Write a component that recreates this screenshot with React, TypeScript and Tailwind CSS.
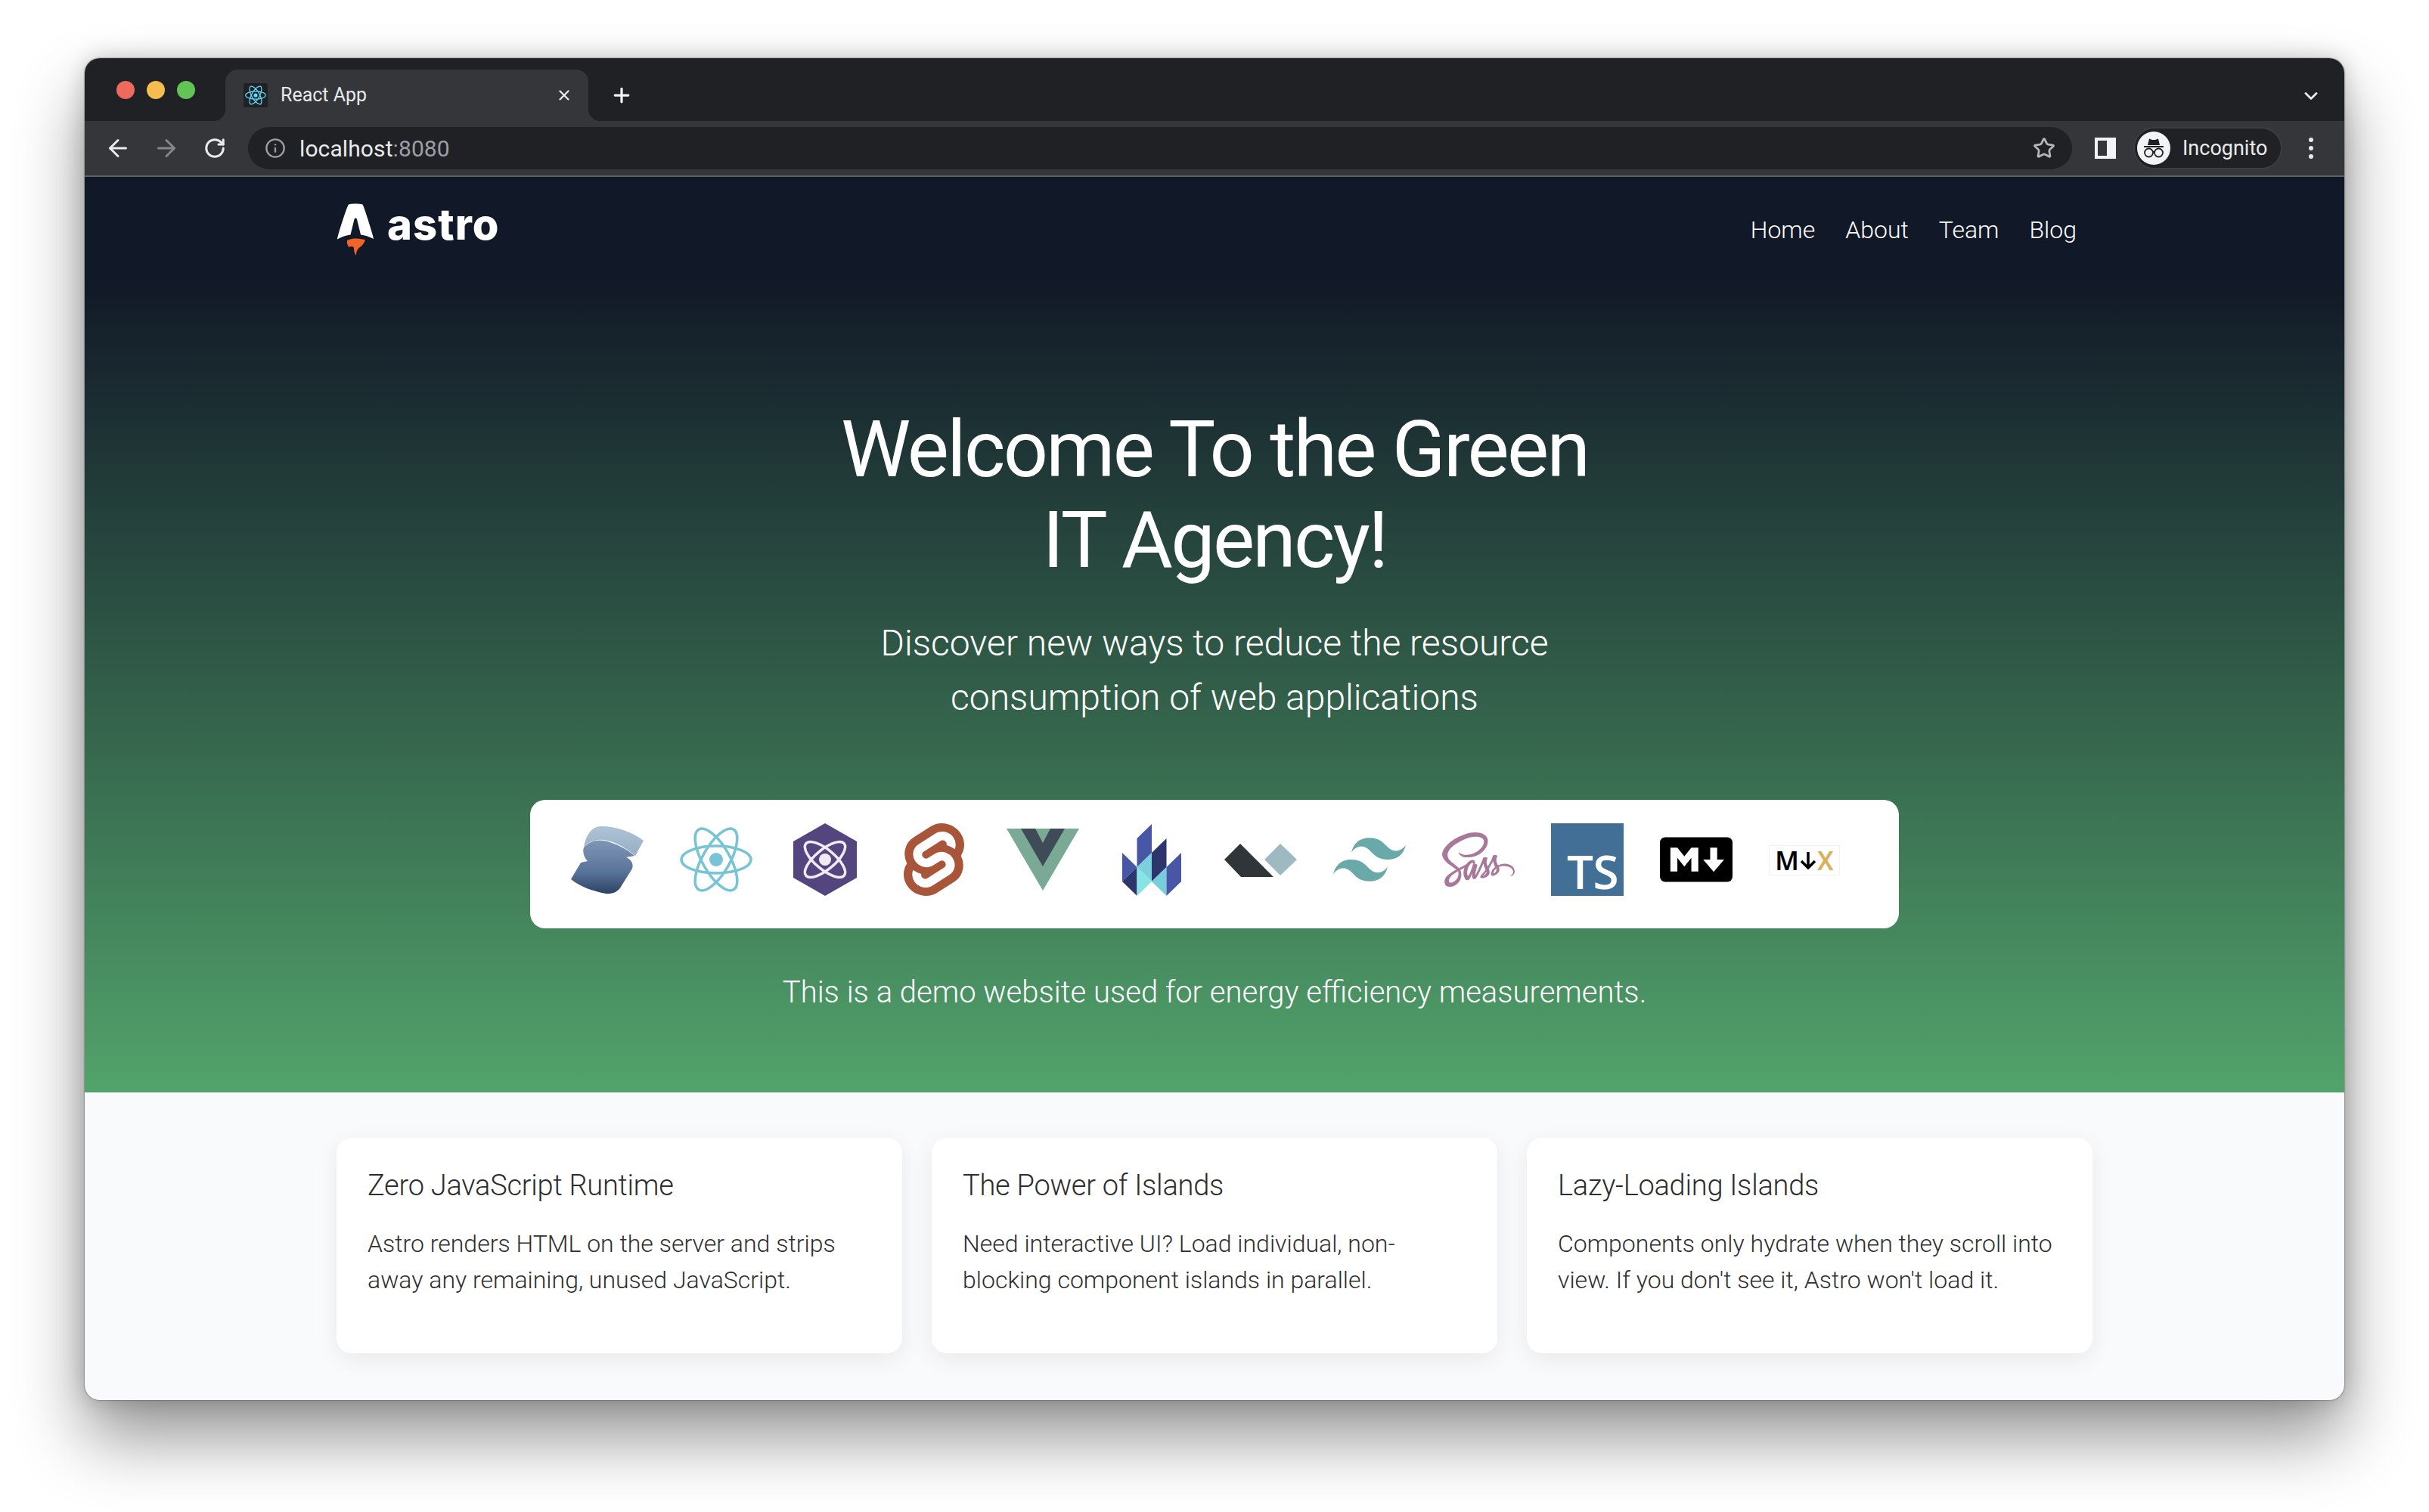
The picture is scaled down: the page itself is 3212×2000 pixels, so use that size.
import React from "react";
import { SiReact, SiSvelte, SiTailwindcss, SiMarkdown } from "react-icons/si";
import { FaSass } from "react-icons/fa";
import { Plus, X, ArrowLeft, ArrowRight, RotateCw, Info, Star, ChevronDown } from "lucide-react";

const roboto = { fontFamily: "Roboto, 'Liberation Sans', sans-serif" };

function Atom({ size, color, r, sw }: { size: number; color: string; r: number; sw: number }) {
  return (
    <svg width={size} height={size} viewBox="0 0 96 96" fill="none" stroke={color} strokeWidth={sw}>
      <ellipse cx="48" cy="48" rx="46" ry="18" />
      <ellipse cx="48" cy="48" rx="46" ry="18" transform="rotate(60 48 48)" />
      <ellipse cx="48" cy="48" rx="46" ry="18" transform="rotate(120 48 48)" />
      <circle cx="48" cy="48" r={r} fill={color} stroke="none" />
    </svg>
  );
}

function AstroLogo() {
  return (
    <svg width="48" height="70" viewBox="0 0 48 70" className="shrink-0">
      <path d="M15 1.500C16 0 32 0 33.500 1.500C35 3 48 44 48 47C42 44 36 42 31 41.500L26 21C25.500 19 23 19 22.500 21L17.500 41.500C12 42 6 44 0 47.500C0 44 13 3 15 1.500Z" fill="#ffffff" />
      <path d="M13 49C17 47.500 19 46.500 24 46.500C29 46.500 31 47.500 37 48C36 52 33 56 30 58C27 60 25 63 25 69C23 67 22 63 22 60C22 58 21 57 19 57C17 57 15.500 58 15.500 58C13 55 12.500 52 13 49Z" fill="#f0642a" />
    </svg>
  );
}

function Solid() {
  return (
    <svg width="96" height="96" viewBox="0 0 96 96" className="shrink-0">
      <defs>
        <linearGradient id="sa" x1="0" y1="0" x2="0" y2="1">
          <stop offset="0" stopColor="#afc3d6" />
          <stop offset="1" stopColor="#95aec6" />
        </linearGradient>
        <linearGradient id="sb" x1="0" y1="0" x2="0" y2="1">
          <stop offset="0" stopColor="#7f96b6" />
          <stop offset="0.6" stopColor="#587399" />
          <stop offset="1" stopColor="#2c4264" />
        </linearGradient>
      </defs>
      <path d="M17 32C20 14 28 5 38 4C55 3 80 10 96 23L85 43C70 30 50 20 36 22C26 23 20 28 17 32Z" fill="url(#sa)" />
      <path d="M17 32C24 24 34 21 44 23C58 26 74 34 84 43L73 45C80 48 83 54 81 60L66 84C62 91 54 94 46 93C30 90 12 84 0 74L13 52L22 50C17 45 15 38 17 32Z" fill="url(#sb)" />
    </svg>
  );
}

function Preact() {
  return (
    <svg width="96" height="96" viewBox="0 0 96 96" className="shrink-0">
      <polygon points="48,0 90,24 90,72 48,96 6,72 6,24" fill="#54457f" />
      <g fill="none" stroke="#efeaf3" strokeWidth="3.500">
        <ellipse cx="48" cy="48" rx="33" ry="13" transform="rotate(40 48 48)" />
        <ellipse cx="48" cy="48" rx="33" ry="13" transform="rotate(-40 48 48)" />
      </g>
      <circle cx="48" cy="48" r="8" fill="#efeaf3" />
    </svg>
  );
}

function Vue() {
  return (
    <svg width="96" height="96" viewBox="0 0 96 96" className="shrink-0">
      <polygon points="0,7 96,7 48,89" fill="#7aa995" />
      <polygon points="19,7 38,7 48,26 58,7 77,7 48,57" fill="#3f4b56" />
    </svg>
  );
}

function Lit() {
  return (
    <svg width="96" height="96" viewBox="0 0 96 96" className="shrink-0">
      <polygon points="9,39 28.500,58 9,77" fill="#4756a5" />
      <polygon points="28.500,58 9,77 28.500,96" fill="#2d366c" />
      <polygon points="48,1 28.500,20 28.500,58 48,39" fill="#4756a5" />
      <polygon points="48,39 28.500,58 48,77" fill="#7ad0dc" />
      <polygon points="28.500,58 48,77 28.500,96" fill="#86e4e4" />
      <polygon points="67.500,20 48,39 48,77 67.500,58" fill="#2d366c" />
      <polygon points="67.500,58 48,77 67.500,96" fill="#78cddb" />
      <polygon points="87,39 67.500,58 67.500,96 87,77" fill="#4756a5" />
    </svg>
  );
}

function Alpine() {
  return (
    <svg width="96" height="96" viewBox="0 0 96 96" className="shrink-0">
      <polygon points="53,48 74,27 96,48 74,69" fill="#9fb9c3" />
      <polygon points="0,48 21,27 65,71 22,71" fill="#30353a" />
    </svg>
  );
}

function Card({ title, lines }: { title: string; lines: string[] }) {
  return (
    <div className="w-[748px] h-[285px] bg-white rounded-[20px] pt-[39px] pl-[41px] shadow-[0_8px_30px_rgba(0,0,0,0.07)]">
      <h2 className="text-[38px] leading-[48px] font-light tracking-[-0.25px] text-[#2d2d2d]">{title}</h2>
      <div className="mt-[29px]">
        {lines.map((l) => (
          <p key={l} className="text-[32px] leading-[48px] font-light text-[#2f2f2f]">{l}</p>
        ))}
      </div>
    </div>
  );
}

export default function App() {
  return (
    <div className="w-[3212px] h-[2000px] bg-white overflow-hidden pt-[77px] pl-[112px]" style={roboto}>
      <div className="w-[2988px] h-[1775px] rounded-[20px] overflow-hidden bg-[#f9fafb] shadow-[0_50px_90px_rgba(0,0,0,0.42),0_0_30px_rgba(0,0,0,0.2),0_0_2px_rgba(0,0,0,0.7)] flex flex-col">
        {/* tab strip */}
        <div className="h-[83px] bg-[#202124] flex items-end shrink-0">
          <div className="flex items-center gap-[16px] pl-[42px] w-[186px] self-start pt-[30px]">
            <span className="w-[24px] h-[24px] rounded-full bg-[#ee6a5f]" />
            <span className="w-[24px] h-[24px] rounded-full bg-[#f5bd4f]" />
            <span className="w-[24px] h-[24px] rounded-full bg-[#61c454]" />
          </div>
          <div className="relative w-[480px] h-[68px] bg-[#35363a] rounded-t-[16px] flex items-center pl-[24px] pr-[21px]">
            <span className="absolute left-[-16px] bottom-0 w-[16px] h-[16px] bg-[radial-gradient(circle_at_0_0,#202124_16px,#35363a_16.500px)]" />
            <span className="absolute right-[-16px] bottom-0 w-[16px] h-[16px] bg-[radial-gradient(circle_at_100%_0,#202124_16px,#35363a_16.500px)]" />
            <span className="w-[32px] h-[32px] bg-[#202124] rounded-[3px] flex items-center justify-center">
              <SiReact size={28} color="#61dafb" />
            </span>
            <span className="ml-[17px] text-[25px] leading-[32px] text-[#e8eaed] flex-1">React App</span>
            <X size={22} color="#e8eaed" strokeWidth={2.5} />
          </div>
          <div className="self-center ml-[29px] mt-[14px]">
            <Plus size={30} color="#f1f3f4" strokeWidth={2.6} />
          </div>
          <div className="flex-1" />
          <div className="self-center mt-[16px] mr-[30px]">
            <ChevronDown size={28} color="#e8eaed" strokeWidth={2.4} />
          </div>
        </div>
        {/* toolbar */}
        <div className="h-[72px] bg-[#35363a] flex items-center shrink-0">
          <div className="w-[216px] flex items-center pl-[26px] gap-[28px] shrink-0">
            <ArrowLeft size={36} color="#e8eaed" strokeWidth={2} />
            <ArrowRight size={36} color="#85878a" strokeWidth={2} />
            <RotateCw size={30} color="#e8eaed" strokeWidth={2.4} className="ml-[3px]" />
          </div>
          <div className="w-[2412px] h-[56px] bg-[#202124] rounded-full flex items-center pl-[22px] pr-[22px] shrink-0">
            <Info size={28} color="#9aa0a6" strokeWidth={2} />
            <span className="ml-[18px] text-[30px] text-[#e8eaed] tracking-[0.1px]">localhost<span className="text-[#9aa0a6]">:8080</span></span>
            <div className="flex-1" />
            <Star size={30} color="#b5b7ba" strokeWidth={2.2} />
          </div>
          <div className="ml-[30px] w-[28px] h-[28px] bg-[#f1f3f4] shrink-0 border-[4px] border-[#f1f3f4] flex">
            <span className="w-[12px] bg-[#35363a]" />
          </div>
          <div className="ml-[23px] w-[197px] h-[56px] rounded-full bg-[#202124] border-2 border-[#3c3d41] flex items-center pl-[3px] shrink-0">
            <span className="w-[44px] h-[44px] rounded-full bg-[#f1f3f4] flex items-center justify-center">
              <svg width="32" height="32" viewBox="0 0 32 32" fill="none">
                <path d="M10 3.500L14 5L18 5L22 3.500L24 12L8 12Z" fill="#202124" />
                <path d="M3 14H29" stroke="#202124" strokeWidth="2" />
                <circle cx="9.500" cy="22" r="5.500" stroke="#202124" strokeWidth="1.800" />
                <circle cx="22.500" cy="22" r="5.500" stroke="#202124" strokeWidth="1.800" />
                <path d="M15 21H17" stroke="#202124" strokeWidth="1.800" />
              </svg>
            </span>
            <span className="ml-[16px] text-[27px] text-[#e8eaed]">Incognito</span>
          </div>
          <div className="ml-[35px] flex flex-col gap-[5px] shrink-0">
            <span className="w-[6px] h-[6px] rounded-full bg-[#e8eaed]" />
            <span className="w-[6px] h-[6px] rounded-full bg-[#e8eaed]" />
            <span className="w-[6px] h-[6px] rounded-full bg-[#e8eaed]" />
          </div>
        </div>
        <div className="h-[2px] bg-[#5f6064] shrink-0" />
        {/* hero */}
        <div className="h-[1211px] shrink-0 bg-[linear-gradient(180deg,#111827_0%,#111827_11%,#52a36b_100%)] flex flex-col items-center text-white">
          <div className="w-full flex justify-between items-start pl-[334px] pr-[354px] pt-[35px]">
            <div className="flex items-start">
              <AstroLogo />
              <span className="ml-[18px] mt-[-4px] text-[56px] leading-[64px] font-extrabold tracking-[1.1px] text-white" style={{ fontFamily: "Inter, sans-serif" }}>astro</span>
            </div>
            <nav className="flex gap-[40px] text-[32px] leading-[64px] font-light mt-[3px]">
              <span>Home</span>
              <span>About</span>
              <span>Team</span>
              <span>Blog</span>
            </nav>
          </div>
          <h1 className="mt-[196px] text-[104px] leading-[120px] font-normal text-center tracking-[-2.7px]">
            Welcome To the Green
            <br />
            IT Agency!
          </h1>
          <p className="mt-[40px] text-[48px] leading-[72px] font-light text-center">
            Discover new ways to reduce the resource
            <br />
            consumption of web applications
          </p>
          <div className="mt-[99px] w-[1810px] h-[170px] bg-white rounded-[20px] flex items-start gap-[48px] pl-[54px] pt-[31px]">
            <Solid />
            <Atom size={96} color="#76c4d6" r={9} sw={3.5} />
            <Preact />
            <div className="w-[96px] h-[96px] flex justify-center shrink-0"><SiSvelte size={96} color="#a9553a" /></div>
            <Vue />
            <Lit />
            <Alpine />
            <SiTailwindcss size={96} color="#6aa9aa" className="shrink-0" />
            <div className="w-[96px] h-[96px] flex items-center shrink-0"><FaSass size={96} color="#a8789a" /></div>
            <div className="w-[96px] h-[96px] bg-[#426f96] flex items-end justify-end pr-[7px] shrink-0">
              <span className="text-[62px] leading-[66px] font-semibold text-white tracking-[-0.5px]" style={{ fontFamily: "'Open Sans', sans-serif" }}>TS</span>
            </div>
            <div className="w-[96px] h-[96px] flex items-center shrink-0"><SiMarkdown size={96} color="#000000" /></div>
            <div className="w-[96px] h-[96px] flex items-start shrink-0 pt-[29px]">
              <div className="w-[94px] h-[40px] border border-[#f2f2f2] flex items-center justify-center text-[34px] leading-[38px] font-semibold text-black" style={{ fontFamily: "'Noto Sans', sans-serif" }}>
                <span>M</span>
                <svg width="22" height="24" viewBox="0 0 22 24" fill="none" stroke="#000000" strokeWidth="3.500" className="mx-[1px]">
                  <path d="M11 1V21M2 13L11 22L20 13" />
                </svg>
                <span className="text-[#d8b15a] font-semibold">X</span>
              </div>
            </div>
          </div>
          <p className="mt-[55px] text-[40px] leading-[60px] font-light text-center">
            This is a demo website used for energy efficiency measurements.
          </p>
        </div>
        {/* cards */}
        <div className="flex-1 flex justify-center gap-[39px] pt-[60px]">
          <Card title="Zero JavaScript Runtime" lines={["Astro renders HTML on the server and strips", "away any remaining, unused JavaScript."]} />
          <Card title="The Power of Islands" lines={["Need interactive UI? Load individual, non-", "blocking component islands in parallel."]} />
          <Card title="Lazy-Loading Islands" lines={["Components only hydrate when they scroll into", "view. If you don't see it, Astro won't load it."]} />
        </div>
      </div>
    </div>
  );
}
